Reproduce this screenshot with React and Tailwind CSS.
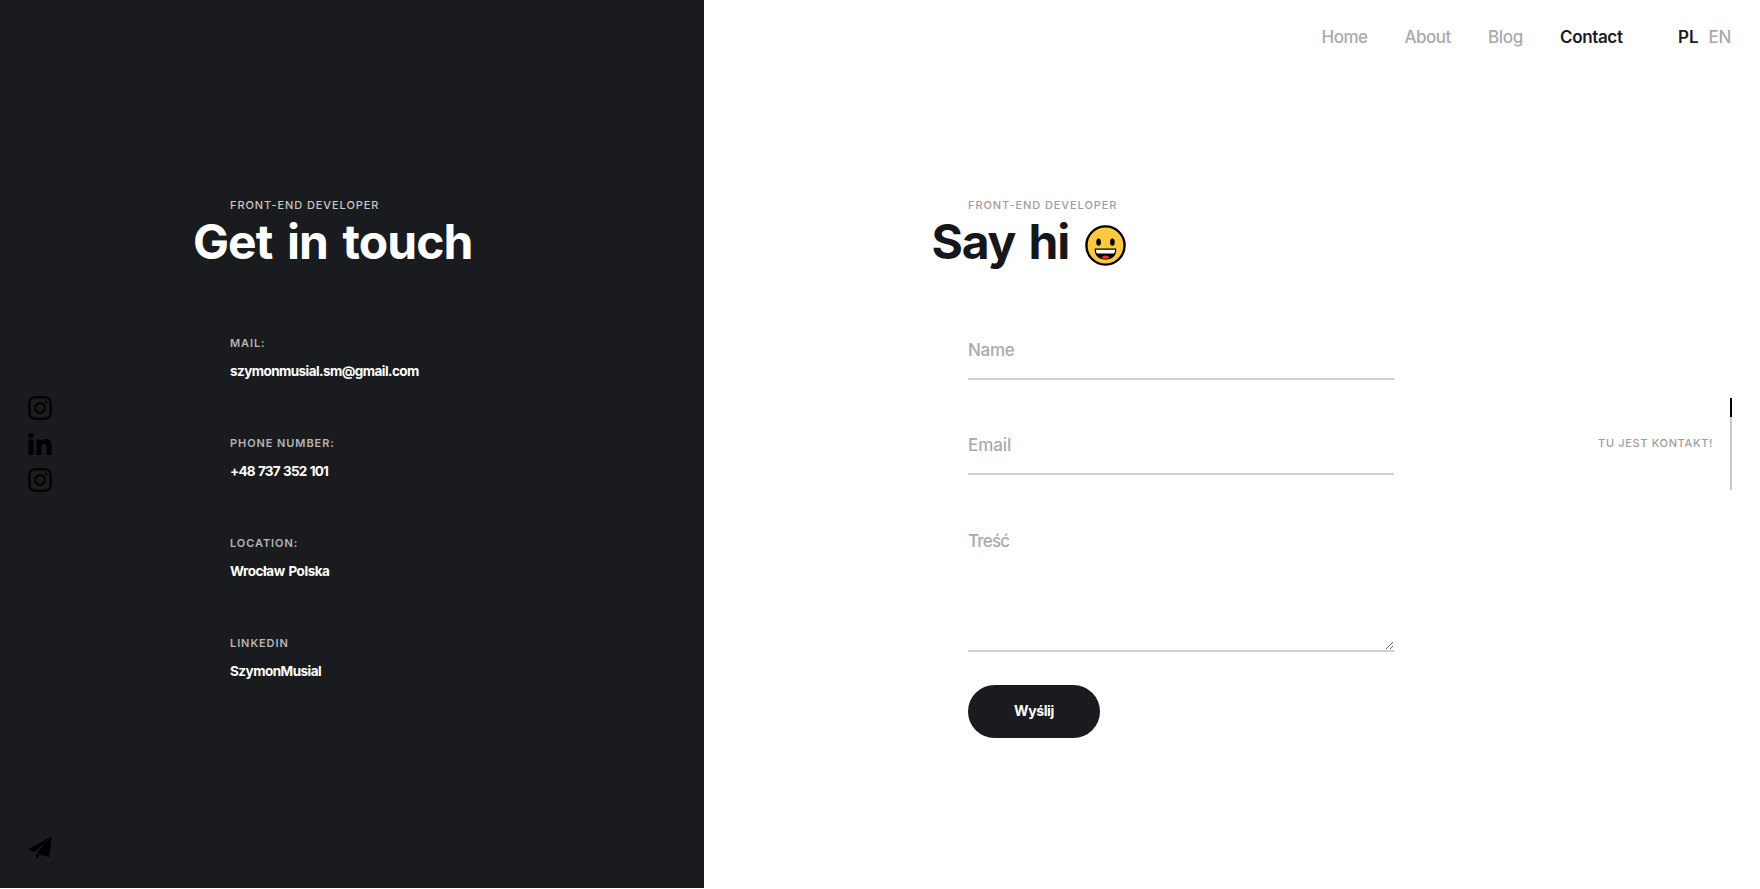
const contacts = [
  { label: "MAIL:", value: "szymonmusial.sm@gmail.com", tracking: "tracking-[-0.57px]" },
  { label: "PHONE NUMBER:", value: "+48 737 352 101", tracking: "tracking-[-0.76px] [word-spacing:0.7px]" },
  { label: "LOCATION:", value: "Wrocław Polska", tracking: "tracking-[-0.46px] [word-spacing:1px]" },
  { label: "LINKEDIN", value: "SzymonMusial", tracking: "tracking-[-0.52px]" },
];

function InstagramIcon() {
  return (
    <svg viewBox="0 0 24 24" className="size-6" fill="none" stroke="currentColor" strokeWidth="2">
      <rect x="1.300" y="1.300" width="21.400" height="21.400" rx="6" />
      <circle cx="12" cy="12" r="4.700" />
      <circle cx="18" cy="6" r="1.300" fill="currentColor" stroke="none" />
    </svg>
  );
}

function LinkedinIcon() {
  return (
    <svg viewBox="0 0 24 24" className="size-6" fill="currentColor">
      <circle cx="3" cy="3.500" r="2.700" />
      <path d="M.5 7.500h5V23h-5zM8.500 7.500h4.800v2.100c.9-1.600 2.600-2.500 4.700-2.500 4.300 0 5.700 2.700 5.700 7V23h-5v-7.800c0-2.200-.5-3.700-2.400-3.700-2 0-2.800 1.400-2.800 3.700V23h-5z" />
    </svg>
  );
}

function PlaneIcon() {
  return (
    <svg viewBox="0 0 24 24" className="mt-auto mb-[28px] size-6" fill="currentColor">
      <path d="M23.700.7L0 13.300l5.900 2.400zM23.700.7L8.300 16.900l12.900 4.300z" />
      <path d="M21.800 3.300L4.500 15.200l1.600.9zM8.300 18v5.300l3.200-4.200z" />
    </svg>
  );
}

function SmileIcon() {
  return (
    <svg viewBox="0 0 41 41" className="mt-[6px] ml-[16px] size-[41px] shrink-0">
      <circle cx="20.5" cy="20.5" r="19.1" fill="#ffc83d" stroke="#000" strokeWidth="2.4" />
      <ellipse cx="13.6" cy="17.2" rx="2.3" ry="3.6" fill="#000" />
      <ellipse cx="27.4" cy="17.2" rx="2.3" ry="3.6" fill="#000" />
      <path d="M9.800 23.500h21.400v2c0 5.500-4.500 9-10.700 9s-10.700-3.500-10.700-9z" fill="#000" />
      <path d="M11 24.700h19v1.600c0 1.400-.9 2.300-2.300 2.300H13.300c-1.400 0-2.300-.9-2.300-2.300z" fill="#fff" />
      <path d="M16.300 32.800c.7-1.500 2.200-2.400 4.200-2.400s3.500.9 4.200 2.400c-1.200.6-2.600.9-4.200.9s-3-.3-4.200-.9z" fill="#f03a17" />
    </svg>
  );
}

function SocialRail() {
  return (
    <div className="flex w-[52px] shrink-0 flex-col pl-7 text-black">
      <div className="mt-[396px] flex flex-col gap-3">
        <InstagramIcon />
        <LinkedinIcon />
        <InstagramIcon />
      </div>
      <PlaneIcon />
    </div>
  );
}

function ContactPanel() {
  return (
    <section className="flex h-[888px] w-[704px] shrink-0 bg-[#1a1b1e] text-white">
      <SocialRail />
      <div className="ml-[178px] pt-[197px]">
        <p className="text-[11px] leading-4 font-medium tracking-[0.92px] text-[#c8c8c9]">FRONT-END DEVELOPER</p>
        <h1 className="-ml-[37px] pt-px text-[48px] leading-[56px] font-bold tracking-[-0.95px] whitespace-nowrap [word-spacing:4.2px]">
          Get in touch
        </h1>
        <dl className="mt-[64.6px]">
          {contacts.map((c) => (
            <div key={c.label} className="h-[100.25px]">
              <dt className="text-[11px] leading-4 font-semibold tracking-[0.92px] text-[#b5b5b6]">{c.label}</dt>
              <dd className={`mt-[10px] text-[13.5px] leading-5 font-bold ${c.tracking}`}>{c.value}</dd>
            </div>
          ))}
        </dl>
      </div>
    </section>
  );
}

function Nav() {
  return (
    <nav className="grid h-[75px] shrink-0 grid-cols-[83px_83.5px_72px_118px_30.5px_51.5px] items-center justify-end text-[17px] font-medium text-[#a9a9ae]">
      <a className="tracking-[-0.5px]">Home</a>
      <a className="tracking-[-0.5px]">About</a>
      <a className="tracking-[-0.3px]">Blog</a>
      <a className="font-semibold tracking-[-0.35px] text-[#1a1b1e]">Contact</a>
      <a className="font-semibold text-[#1a1b1e]">PL</a>
      <a className="tracking-[-0.3px]">EN</a>
    </nav>
  );
}

const field =
  "block w-full border-b-2 border-[#cfcfcf] bg-transparent text-[17px] font-medium leading-6 outline-none placeholder:text-[#a9a9ae] placeholder:opacity-100";

function ContactForm() {
  return (
    <div className="w-[426px] pt-[122px]">
      <p className="text-[11px] leading-4 font-medium tracking-[0.92px] text-[#9c9ca3]">FRONT-END DEVELOPER</p>
      <h2 className="-ml-[36.5px] flex h-[57px] items-center pt-px text-[48px] leading-[56px] font-bold tracking-[-1.2px] text-[#16171b] [word-spacing:3px]">
        Say hi
        <SmileIcon />
      </h2>
      <form className="mt-[68px]">
        <input placeholder="Name" className={`${field} h-[42px] pb-4 tracking-[-0.3px]`} />
        <input placeholder="Email" className={`${field} mt-[53px] h-[42px] pb-4 tracking-[-0.1px]`} />
        <textarea placeholder="Treść" className={`${field} mt-[54px] h-[123px] resize-y tracking-[-0.8px]`} />
        <button className="mt-[33px] h-[53px] w-[132px] rounded-full bg-[#1a1b1e] pb-[2px] text-[14px] font-bold tracking-[-0.4px] text-white">
          Wyślij
        </button>
      </form>
    </div>
  );
}

function PageMarker() {
  return (
    <div className="mt-[323px] mr-[28px] ml-auto flex h-[92px] gap-[17px]">
      <p className="mt-[37px] text-[11px] leading-4 font-medium tracking-[0.65px] text-[#9c9ca3]">TU JEST KONTAKT!</p>
      <div className="h-[92px] w-[2px] bg-[#c9c9c9]">
        <div className="h-[19px] bg-black" />
      </div>
    </div>
  );
}

export default function App() {
  return (
    <div className="flex h-[889px] w-[1760px] overflow-hidden bg-white font-['Inter',sans-serif]">
      <ContactPanel />
      <main className="flex min-w-0 flex-1 flex-col">
        <Nav />
        <div className="flex items-start pl-[264px]">
          <ContactForm />
          <PageMarker />
        </div>
      </main>
    </div>
  );
}
